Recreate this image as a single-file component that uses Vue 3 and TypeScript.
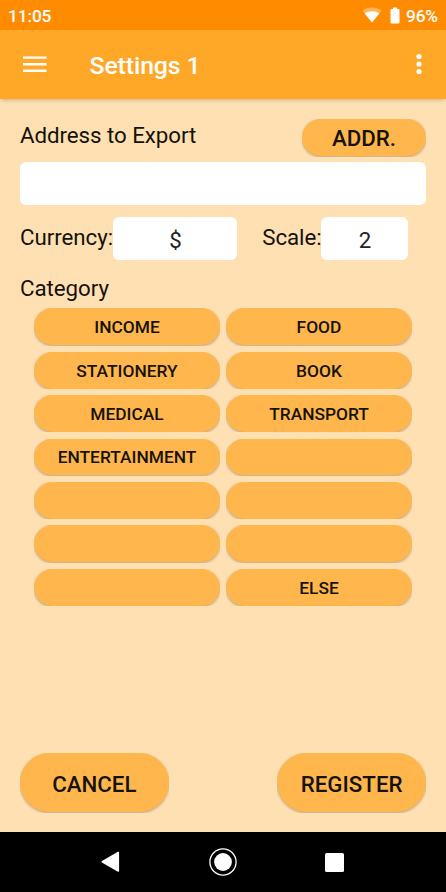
<script setup lang="ts">
import { ref } from 'vue'

const address = ref('')
const currency = ref('$')
const scale = ref('2')

const categories: string[] = [
  'INCOME', 'FOOD',
  'STATIONERY', 'BOOK',
  'MEDICAL', 'TRANSPORT',
  'ENTERTAINMENT', '',
  '', '',
  '', '',
  '', 'ELSE',
]
</script>

<template>
  <div class="screen">
    <div class="status">
      <span>11:05</span>
      <div class="status-right">
        <svg class="wifi" width="20" height="16" viewBox="0 0 20 16">
          <path d="M10 15.5 0.4 3.7C3.2 1.6 6.4 0.6 10 0.6s6.8 1 9.6 3.1Z" fill="#fff" fill-opacity=".35" />
          <path d="M10 15.5 2.7 6.5C4.8 5 7.200 4.200 10 4.200s5.200.8 7.300 2.300Z" fill="#fff" />
        </svg>
        <svg class="battery" width="10" height="17" viewBox="0 0 10 17">
          <path d="M3 0.400h4v1.700h1.500a1 1 0 0 1 1 1v12.400a1 1 0 0 1-1 1h-7a1 1 0 0 1-1-1V3.100a1 1 0 0 1 1-1H3Z" fill="#fff" />
        </svg>
        <span>96%</span>
      </div>
    </div>

    <header class="appbar">
      <svg class="menu" width="24" height="17" viewBox="0 0 24 17">
        <path d="M0 0.500h23.500v2.300H0ZM0 7.100h23.500v2.300H0ZM0 13.600h23.500v2.300H0Z" fill="#fff" />
      </svg>
      <h1>Settings 1</h1>
      <svg class="more" width="6" height="22" viewBox="0 0 6 22">
        <circle cx="3" cy="3.500" r="2.600" fill="#fff" />
        <circle cx="3" cy="11" r="2.600" fill="#fff" />
        <circle cx="3" cy="18.500" r="2.600" fill="#fff" />
      </svg>
    </header>

    <main class="content">
      <div class="address-row">
        <span class="label address-label">Address to Export</span>
        <div class="clip addr"><button class="btn large">ADDR.</button></div>
      </div>
      <input v-model="address" class="field" aria-label="Address to Export" />
      <div class="options">
        <span class="label currency-label">Currency:</span>
        <input v-model="currency" class="field currency" aria-label="Currency" />
        <span class="label scale-label">Scale:</span>
        <input v-model="scale" class="field scale" aria-label="Scale" />
      </div>
      <div class="label category-label">Category</div>
      <div class="grid">
        <div v-for="(name, i) in categories" :key="i" class="clip">
          <button class="btn">{{ name }}</button>
        </div>
      </div>
      <div class="actions">
        <div class="clip action"><button class="btn large">CANCEL</button></div>
        <div class="clip action"><button class="btn large">REGISTER</button></div>
      </div>
    </main>

    <nav class="navbar">
      <svg width="19" height="22" viewBox="0 0 19 22">
        <path d="M17.300 1.500v18.500L1.300 10.700Z" fill="#fff" stroke="#fff" stroke-width="1.600" stroke-linejoin="round" />
      </svg>
      <svg width="28" height="28" viewBox="0 0 28 28">
        <circle cx="14" cy="14" r="13.100" fill="none" stroke="#fff" stroke-width="1.300" />
        <circle cx="14" cy="14" r="8.900" fill="#fff" />
      </svg>
      <svg width="19" height="19" viewBox="0 0 19 19">
        <rect width="19" height="19" rx="1.500" fill="#fff" />
      </svg>
    </nav>
  </div>
</template>

<style>
body {
  margin: 0;
}
</style>

<style scoped>
.screen {
  width: 446px;
  height: 892px;
  display: flex;
  flex-direction: column;
  overflow: hidden;
  background: #ffe0b2;
  font-family: Roboto, sans-serif;
  color: #141208;
}
.screen * {
  box-sizing: border-box;
}
.status {
  height: 30px;
  flex: none;
  display: flex;
  justify-content: space-between;
  align-items: center;
  padding: 1px 8px 0;
  background: #ff8c00;
  color: #fff;
  font-size: 17.300px;
  font-weight: 500;
  letter-spacing: -0.100px;
}
.status-right {
  display: flex;
  align-items: center;
}
.wifi {
  margin: -1px 8px 0 0;
}
.battery {
  margin: -1px 5.500px 0 0;
}
.appbar {
  height: 69px;
  flex: none;
  display: flex;
  align-items: center;
  padding: 0 24.500px 0 23px;
  background: #ffa726;
  box-shadow: 0 2px 4px -1px rgba(0, 0, 0, 0.22);
}
.menu,
.more {
  margin-top: -1px;
}
h1 {
  flex: 1;
  margin: 2px 0 0 42.500px;
  color: #fff;
  font-size: 24.800px;
  font-weight: 500;
  line-height: 30px;
  letter-spacing: -0.100px;
}
.content {
  flex: 1;
  display: flex;
  flex-direction: column;
  padding: 20px 20px 19.500px;
}
.label {
  font-size: 22.300px;
  line-height: 28px;
  letter-spacing: -0.050px;
  white-space: nowrap;
}
.address-row {
  height: 43px;
  flex: none;
  display: flex;
  justify-content: space-between;
}
.address-label {
  margin-top: 1.500px;
}
.clip {
  overflow: hidden;
}
.btn {
  display: block;
  width: 100%;
  height: calc(100% - 0.500px);
  padding: 1px 0 0;
  border: 0;
  border-radius: 30px;
  background: #ffb74d;
  box-shadow: 0 1px 3px rgba(0, 0, 0, 0.3);
  color: #171206;
  font: 500 17.350px/20px Roboto, sans-serif;
}
.large {
  font-size: 22.300px;
  line-height: 26px;
}
.addr {
  width: 124px;
  height: 37.500px;
}
.field {
  display: block;
  width: 100%;
  height: 43px;
  flex: none;
  padding: 2px 0 0;
  border: 0;
  border-radius: 6px;
  outline: 0;
  background: #fff;
  color: #222;
  font: 400 22.300px/28px Roboto, sans-serif;
  text-align: center;
}
.options {
  display: flex;
  height: 43px;
  margin-top: 12px;
}
.options .label {
  padding-top: 6px;
}
.currency-label {
  width: 93.400px;
}
.currency {
  width: 124px;
}
.scale-label {
  width: 84px;
  padding-left: 24.800px;
}
.scale {
  width: 87px;
}
.category-label {
  margin-top: 14px;
}
.grid {
  display: grid;
  grid-template-columns: 186px 186px;
  grid-auto-rows: 37.300px;
  gap: 6.100px 6px;
  margin: 6.400px 0 0 14px;
}
.actions {
  display: flex;
  justify-content: space-between;
  margin-top: auto;
}
.action {
  width: 148.700px;
  height: 59.500px;
}
.action .large {
  padding-top: 2px;
}
.navbar {
  height: 60px;
  flex: none;
  display: flex;
  align-items: center;
  justify-content: space-between;
  padding: 0 102px 0 101px;
  background: #000;
}
</style>
